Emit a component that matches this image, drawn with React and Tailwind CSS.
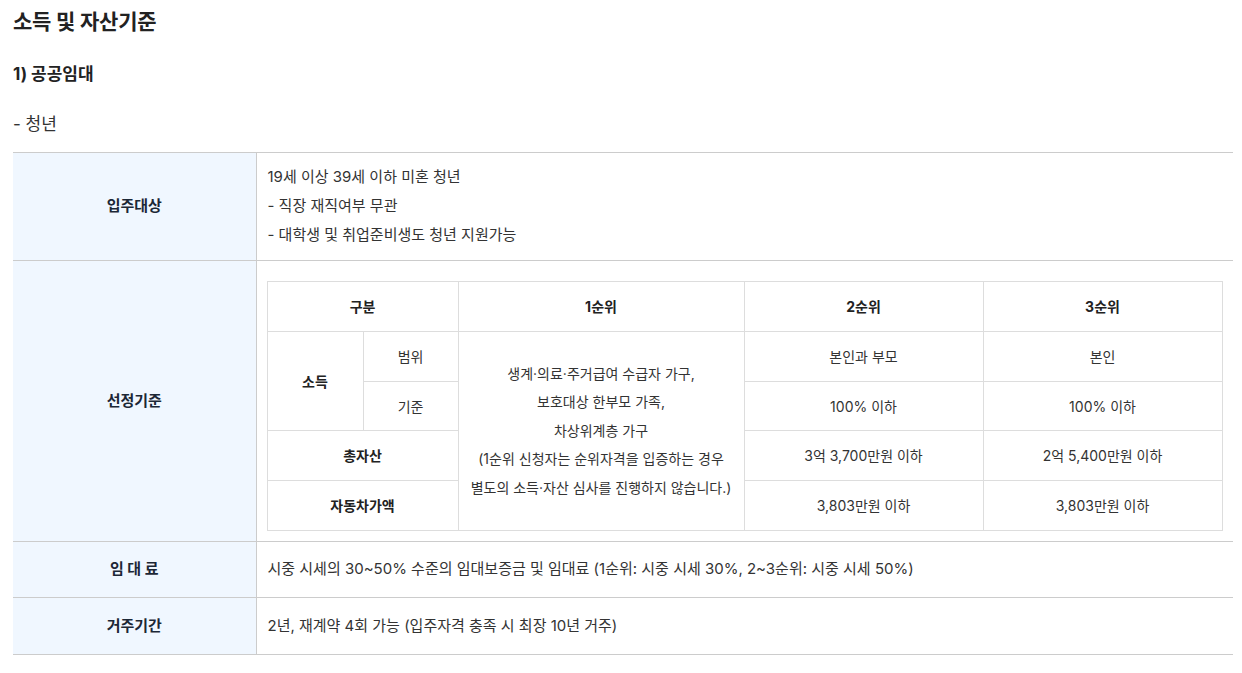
export default function App() {
  const font = { fontFamily: 'Inter, "Noto Sans CJK KR", sans-serif' };
  const th = "border border-[#dddddd] text-center font-bold text-[#222] h-[50px] p-0";
  const td = "border border-[#dddddd] text-center text-[#333] h-[50px] p-0";
  const td49 = "border border-[#dddddd] text-center text-[#333] h-[49px] p-0";
  const head = "bg-[#f0f7ff] border-r border-[#cccccc] font-bold text-[#1c2736] text-center align-middle text-[15px]";
  return (
    <div className="w-[1242px] h-[673px] bg-white text-[#333] px-[13px] pt-[7px]" style={font}>
      <h2 className="text-[21px] leading-[30px] font-bold text-[#222] tracking-[-0.2px]">소득 및 자산기준</h2>
      <h3 className="mt-[22px] text-[17px] leading-[30px] font-bold text-[#222]">1) 공공임대</h3>
      <p className="mt-[20px] text-[17px] leading-[30px] text-[#333]">- 청년</p>
      <table className="mt-[13px] w-[1220px] border-collapse table-fixed">
        <colgroup>
          <col className="w-[243px]" />
          <col />
        </colgroup>
        <tbody>
          <tr className="border-t border-b border-[#cccccc]">
            <th className={head}>입주대상</th>
            <td className="pl-[11px] py-[10px] leading-[29px] text-[15px] text-[#333]">
              <div className="-translate-y-[1px]">19세 이상 39세 이하 미혼 청년</div>
              <div className="-translate-y-[1px]">- 직장 재직여부 무관</div>
              <div className="-translate-y-[1px]">- 대학생 및 취업준비생도 청년 지원가능</div>
            </td>
          </tr>
          <tr className="border-b border-[#cccccc]">
            <th className={head}>선정기준</th>
            <td className="pl-[10px] pr-[10px] pt-[20px] pb-[10px] text-[14px]">
              <table className="w-[955px] border-collapse table-fixed">
                <colgroup>
                  <col className="w-[96px]" />
                  <col className="w-[95px]" />
                  <col className="w-[286px]" />
                  <col className="w-[239px]" />
                  <col className="w-[239px]" />
                </colgroup>
                <tbody>
                  <tr>
                    <th colSpan={2} className={th}>구분</th>
                    <th className={th}>1순위</th>
                    <th className={th}>2순위</th>
                    <th className={th}>3순위</th>
                  </tr>
                  <tr>
                    <th rowSpan={2} className={th}>소득</th>
                    <td className={td}>범위</td>
                    <td rowSpan={4} className="border border-[#dddddd] text-center text-[#333] leading-[28.5px] p-0">
                      <div>생계·의료·주거급여 수급자 가구,</div>
                      <div>보호대상 한부모 가족,</div>
                      <div>차상위계층 가구</div>
                      <div>(1순위 신청자는 순위자격을 입증하는 경우</div>
                      <div>별도의 소득·자산 심사를 진행하지 않습니다.)</div>
                    </td>
                    <td className={td}>본인과 부모</td>
                    <td className={td}>본인</td>
                  </tr>
                  <tr>
                    <td className={td49}>기준</td>
                    <td className={td49}>100% 이하</td>
                    <td className={td49}>100% 이하</td>
                  </tr>
                  <tr>
                    <th colSpan={2} className={th}>총자산</th>
                    <td className={td}>3억 3,700만원 이하</td>
                    <td className={td}>2억 5,400만원 이하</td>
                  </tr>
                  <tr>
                    <th colSpan={2} className={th}>자동차가액</th>
                    <td className={td}>3,803만원 이하</td>
                    <td className={td}>3,803만원 이하</td>
                  </tr>
                </tbody>
              </table>
            </td>
          </tr>
          <tr className="border-b border-[#cccccc]">
            <th className={`h-[56px] ${head}`}>임 대 료</th>
            <td className="pl-[11px] text-[15px] text-[#333]">시중 시세의 30~50% 수준의 임대보증금 및 임대료 (1순위: 시중 시세 30%, 2~3순위: 시중 시세 50%)</td>
          </tr>
          <tr className="border-b border-[#cccccc]">
            <th className={`h-[57px] ${head}`}>거주기간</th>
            <td className="pl-[11px] text-[15px] text-[#333]">2년, 재계약 4회 가능 (입주자격 충족 시 최장 10년 거주)</td>
          </tr>
        </tbody>
      </table>
    </div>
  );
}
